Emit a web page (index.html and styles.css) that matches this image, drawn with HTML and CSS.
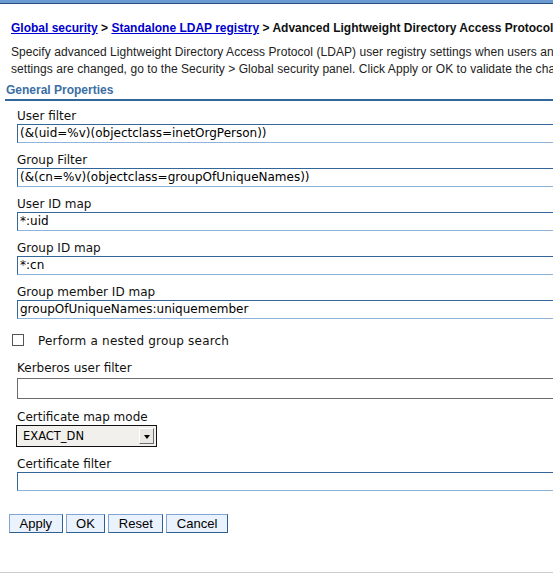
FILE: index.html
```html
<!DOCTYPE html>
<html>
<head>
<meta charset="utf-8">
<link rel="stylesheet" href="styles.css">
</head>
<body>
<div class="topbar"></div>
<div class="page">
  <div class="breadcrumb"><a href="#">Global security</a> &gt; <a href="#">Standalone LDAP registry</a> &gt; Advanced Lightweight Directory Access Protocol user registry settings</div>
  <div class="desc">
    <div class="line">Specify advanced Lightweight Directory Access Protocol (LDAP) user registry settings when users and groups reside in an external LDAP directory. When the advanced LDAP user registry</div>
    <div class="line">settings are changed, go to the Security &gt; Global security panel. Click Apply or OK to validate the changes.</div>
  </div>
  <div class="section-title">General Properties</div>
  <div class="fields">
    <div class="field">
      <div class="label">User filter</div>
      <div class="input">(&amp;(uid=%v)(objectclass=inetOrgPerson))</div>
    </div>
    <div class="field">
      <div class="label">Group Filter</div>
      <div class="input">(&amp;(cn=%v)(objectclass=groupOfUniqueNames))</div>
    </div>
    <div class="field">
      <div class="label">User ID map</div>
      <div class="input">*:uid</div>
    </div>
    <div class="field">
      <div class="label">Group ID map</div>
      <div class="input">*:cn</div>
    </div>
    <div class="field">
      <div class="label">Group member ID map</div>
      <div class="input">groupOfUniqueNames:uniquemember</div>
    </div>
    <div class="check-row">
      <span class="checkbox"></span>
      <span class="check-label">Perform a nested group search</span>
    </div>
    <div class="field">
      <div class="label label-kerb">Kerberos user filter</div>
      <div class="input input-gray"></div>
    </div>
    <div class="field">
      <div class="label label-select">Certificate map mode</div>
      <div class="select">
        <span class="select-text">EXACT_DN</span>
        <span class="select-btn"><span class="arrow"></span></span>
      </div>
    </div>
    <div class="field">
      <div class="label">Certificate filter</div>
      <div class="input"></div>
    </div>
  </div>
  <div class="buttons">
    <button class="btn">Apply</button>
    <button class="btn">OK</button>
    <button class="btn">Reset</button>
    <button class="btn">Cancel</button>
  </div>
  <div class="footer-line"></div>
</div>
</body>
</html>
```
FILE: styles.css
```css
html, body {
  margin: 0;
  padding: 0;
  overflow: hidden;
  background: #ffffff;
}
body {
  width: 553px;
  height: 585px;
}
.topbar {
  height: 3px;
  background: #6c9bd2;
  border-bottom: 1px solid #2a4f80;
}
.page {
  width: 553px;
}
.breadcrumb {
  margin-top: 17px;
  padding-left: 11px;
  font-family: "Liberation Sans", Arial, sans-serif;
  font-weight: bold;
  font-size: 12px;
  line-height: 15px;
  color: #111;
  white-space: nowrap;
}
.breadcrumb a {
  color: #0000cc;
  text-decoration: underline;
}
.desc {
  margin-top: 8px;
  padding-left: 11px;
  font-family: "Liberation Sans", Arial, sans-serif;
  font-size: 12px;
  line-height: 17px;
  letter-spacing: 0.06px;
  color: #222;
}
.line {
  white-space: nowrap;
}
.section-title {
  margin-top: 5px;
  margin-left: 5px;
  padding-left: 1px;
  padding-bottom: 1px;
  font-family: "Liberation Sans", Arial, sans-serif;
  font-weight: bold;
  font-size: 12px;
  line-height: 15px;
  color: #3b6ea5;
  border-bottom: 2px solid #336699;
}
.fields {
  margin-top: 5px;
  padding-left: 17px;
  font-family: "DejaVu Sans", sans-serif;
  font-size: 12px;
  color: #111;
}
.field {
  margin-bottom: 7px;
}
.label {
  line-height: 16px;
  height: 16px;
  padding-top: 2px;
}
.label-kerb {
  padding-top: 0;
  height: 18px;
}
.label-select {
  padding-top: 3px;
}
.input {
  box-sizing: border-box;
  width: 560px;
  height: 19px;
  border-top: 1px solid #336699;
  border-left: 1px solid #336699;
  border-bottom: 1px solid #8fb3d9;
  border-right: 1px solid #8fb3d9;
  padding-left: 2px;
  line-height: 17px;
  white-space: nowrap;
  color: #000;
}
.input-gray {
  height: 21px;
  border: 1px solid #6b6b6b;
}
.check-row {
  display: flex;
  align-items: center;
  height: 24px;
  margin-left: -5px;
  margin-bottom: 10px;
}
.checkbox {
  box-sizing: border-box;
  width: 12px;
  height: 12px;
  border: 1px solid #555;
  background: #fff;
  margin-top: 4px;
  margin-right: 14px;
}
.check-label {
  margin-top: 5px;
  letter-spacing: 0.2px;
}
.select {
  box-sizing: border-box;
  width: 141px;
  height: 22px;
  margin-left: -1px;
  border: 1px solid #111;
  background: #f1f0ec;
  display: flex;
  align-items: center;
  justify-content: space-between;
  padding: 0 2px 0 6px;
}
.select-text {
  font-family: "DejaVu Sans", sans-serif;
  font-size: 11.5px;
  color: #000;
}
.select-btn {
  box-sizing: border-box;
  width: 15px;
  height: 16px;
  background: #e9e8e4;
  border-top: 1px solid #ffffff;
  border-left: 1px solid #ffffff;
  border-right: 1px solid #6e6e6e;
  border-bottom: 1px solid #6e6e6e;
  display: flex;
  align-items: center;
  justify-content: center;
}
.arrow {
  width: 0;
  height: 0;
  border-left: 3px solid transparent;
  border-right: 3px solid transparent;
  border-top: 4px solid #000;
  margin-top: 1px;
}
.buttons {
  margin-top: 23px;
  padding-left: 9px;
  display: flex;
  gap: 3px;
}
.btn {
  box-sizing: border-box;
  height: 19px;
  padding: 0 9.5px;
  margin: 0;
  font-family: "Liberation Sans", Arial, sans-serif;
  font-size: 13px;
  line-height: 15px;
  color: #000;
  background: #eaf2fd;
  border-top: 1px solid #7fa5d0;
  border-left: 1px solid #7fa5d0;
  border-right: 1px solid #2f5f93;
  border-bottom: 1px solid #2f5f93;
  border-radius: 0;
}
.footer-line {
  margin-top: 39px;
  height: 1px;
  background: #cccccc;
}
```
